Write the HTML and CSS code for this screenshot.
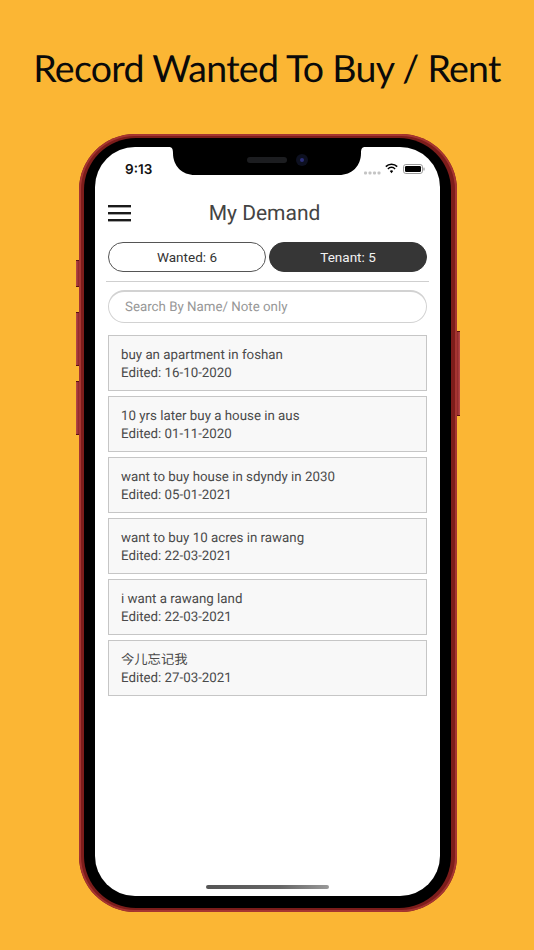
FILE: index.html
```html
<!DOCTYPE html>
<html lang="en">
<head>
<meta charset="utf-8">
<title>My Demand</title>
<link rel="stylesheet" href="styles.css">
</head>
<body>
<h1 class="headline">Record Wanted To Buy / Rent</h1>
<div class="phone">
  <span class="side side-mute"></span>
  <span class="side side-up"></span>
  <span class="side side-down"></span>
  <span class="side side-power"></span>
  <div class="bezel">
    <main class="screen">
      <svg class="notch" width="196" height="29" viewBox="0 0 196 29" aria-hidden="true">
        <path d="M0 0H196C193 0 192 2 192 6C192 19 183 28 170 28H26C13 28 4 19 4 6C4 2 3 0 0 0Z" fill="#000"/>
        <rect x="78" y="10" width="40" height="6" rx="3" fill="#1c1d20"/>
        <circle cx="133" cy="13" r="6" fill="#0d1020"/>
        <circle cx="133" cy="13" r="2" fill="#2b2f7a"/>
      </svg>
      <div class="status">
        <span class="time">9:13</span>
        <span class="status-icons">
          <svg class="dots" width="17" height="4" viewBox="0 0 17 4" aria-hidden="true">
            <g fill="#c4c4c4"><rect x="0" y="0.5" width="3" height="3" rx="1"/><rect x="4.5" y="0.5" width="3" height="3" rx="1"/><rect x="9" y="0.5" width="3" height="3" rx="1"/><rect x="13.5" y="0.5" width="3" height="3" rx="1"/></g>
          </svg>
          <svg class="wifi" width="13" height="11" viewBox="0 0 13 11" aria-hidden="true">
            <g fill="none" stroke="#000" stroke-width="1.5"><path d="M.8 3.6a8 8 0 0 1 11.4 0"/><path d="M2.9 5.9a5 5 0 0 1 7.2 0"/></g>
            <path d="M4.8 8a2.4 2.4 0 0 1 3.4 0L6.5 10.2Z" fill="#000"/>
          </svg>
          <svg class="battery" width="22" height="10" viewBox="0 0 22 10" aria-hidden="true">
            <rect x=".5" y=".5" width="19" height="9" rx="2.4" fill="none" stroke="#9a9a9a"/>
            <rect x="2" y="2" width="16" height="6" rx="1.2" fill="#000"/>
            <rect x="20.4" y="3.4" width="1.2" height="3.2" rx=".6" fill="#9a9a9a"/>
          </svg>
        </span>
      </div>
      <header class="nav">
        <svg class="menu" width="23" height="17" viewBox="0 0 23 17" aria-hidden="true">
          <g fill="#1a1a1a"><rect y="0" width="23" height="2.4"/><rect y="7" width="23" height="2.4"/><rect y="14" width="23" height="2.4"/></g>
        </svg>
        <h2 class="nav-title">My Demand</h2>
      </header>
      <div class="tabs">
        <button class="tab">Wanted: 6</button>
        <button class="tab tab-active">Tenant: 5</button>
      </div>
      <hr class="rule">
      <div class="search">Search By Name/ Note only</div>
      <ul class="list">
        <li class="card"><span>buy an apartment in foshan</span><span>Edited: 16-10-2020</span></li>
        <li class="card"><span>10 yrs later buy a house in aus</span><span>Edited: 01-11-2020</span></li>
        <li class="card"><span>want to buy house in sdyndy in 2030</span><span>Edited: 05-01-2021</span></li>
        <li class="card"><span>want to buy 10 acres in rawang</span><span>Edited: 22-03-2021</span></li>
        <li class="card"><span>i want a rawang land</span><span>Edited: 22-03-2021</span></li>
        <li class="card"><span>今儿忘记我</span><span>Edited: 27-03-2021</span></li>
      </ul>
      <span class="home"></span>
    </main>
  </div>
</div>
</body>
</html>
```
FILE: styles.css
```css
* { box-sizing: border-box; }
html, body { margin: 0; padding: 0; }
body {
  width: 534px;
  height: 950px;
  overflow: hidden;
  background: #fbb634;
  font-family: Roboto, "Noto Sans CJK SC", sans-serif;
  text-rendering: geometricPrecision;
}
.headline {
  margin: 0;
  padding-top: 42px;
  height: 134px;
  text-align: center;
  font: 400 37.5px/52px Lato, sans-serif;
  letter-spacing: -0.7px;
  color: #0a0a0a;
}
.phone {
  position: relative;
  width: 378px;
  height: 778px;
  margin-left: 79px;
  padding: 4px 6px 4px 5px;
  border-radius: 56px;
  background: #7d1d1b;
  box-shadow: inset 0 0 0 2px #a63531;
}
.side {
  position: absolute;
  width: 3px;
  background: linear-gradient(90deg, #b8494a, #8d2627);
  border-top: 1px solid #5c1010;
  border-bottom: 1px solid #5c1010;
}
.side-mute { left: -3px; top: 126px; height: 27px; }
.side-up { left: -3px; top: 178px; height: 54px; }
.side-down { left: -3px; top: 247px; height: 54px; }
.side-power { right: -3px; top: 197px; height: 85px; background: linear-gradient(270deg, #b8494a, #8d2627); }
.bezel {
  height: 770px;
  padding: 9px 11px 12px 11px;
  border-radius: 52px;
  background: #000;
}
.screen {
  position: relative;
  height: 749px;
  padding: 0 13px;
  border-radius: 40px;
  background: #fff;
  overflow: hidden;
}
.notch { position: absolute; left: 74px; top: 0; }
.status {
  display: flex;
  justify-content: space-between;
  align-items: center;
  height: 44px;
  padding: 0 2px 0 17px;
}
.time { margin-top: 1px; font: 600 13.5px/16px Inter, Roboto, sans-serif; color: #111; }
.status-icons { display: flex; align-items: center; }
.dots { margin-top: 7px; }
.wifi { margin-left: 4px; margin-top: -1px; }
.battery { margin-left: 5px; }
.nav {
  position: relative;
  height: 44px;
  display: flex;
  align-items: center;
  justify-content: center;
  padding: 2px 6px 0 0;
}
.menu { position: absolute; left: 0; top: 14px; }
.nav-title {
  margin: 0;
  font: 400 21px/42px Roboto, sans-serif;
  color: #444;
}
.tabs {
  display: flex;
  gap: 3px;
  margin-top: 7px;
}
.tab {
  flex: 1;
  height: 30px;
  padding: 0;
  border: 1px solid #555;
  border-radius: 15px;
  background: #fff;
  font: 400 13.5px/27px Roboto, sans-serif;
  color: #333;
}
.tab-active { background: #363636; border-color: #363636; color: #f2f2f2; }
.rule {
  height: 1px;
  margin: 9px -2px 8px;
  border: 0;
  background: #cfcfcf;
}
.search {
  height: 33px;
  padding-left: 16px;
  border: 1px solid #d2d2d2;
  border-top: 2px solid #d2d2d2;
  border-radius: 16.5px;
  font: 400 13.3px/32px Roboto, sans-serif;
  color: #979797;
}
.list {
  display: flex;
  flex-direction: column;
  gap: 5px;
  margin: 12px 0 0;
  padding: 0;
  list-style: none;
}
.card {
  display: flex;
  flex-direction: column;
  justify-content: center;
  height: 56px;
  padding: 3px 0 0 12px;
  border: 1px solid #c6c6c6;
  background: #f8f8f8;
  font-size: 13.3px;
  line-height: 18px;
  color: #4a4a4a;
}
.home {
  position: absolute;
  left: 111px;
  bottom: 7px;
  width: 123px;
  height: 4px;
  border-radius: 2px;
  background: linear-gradient(90deg, #555, #666 60%, #999);
}
```
